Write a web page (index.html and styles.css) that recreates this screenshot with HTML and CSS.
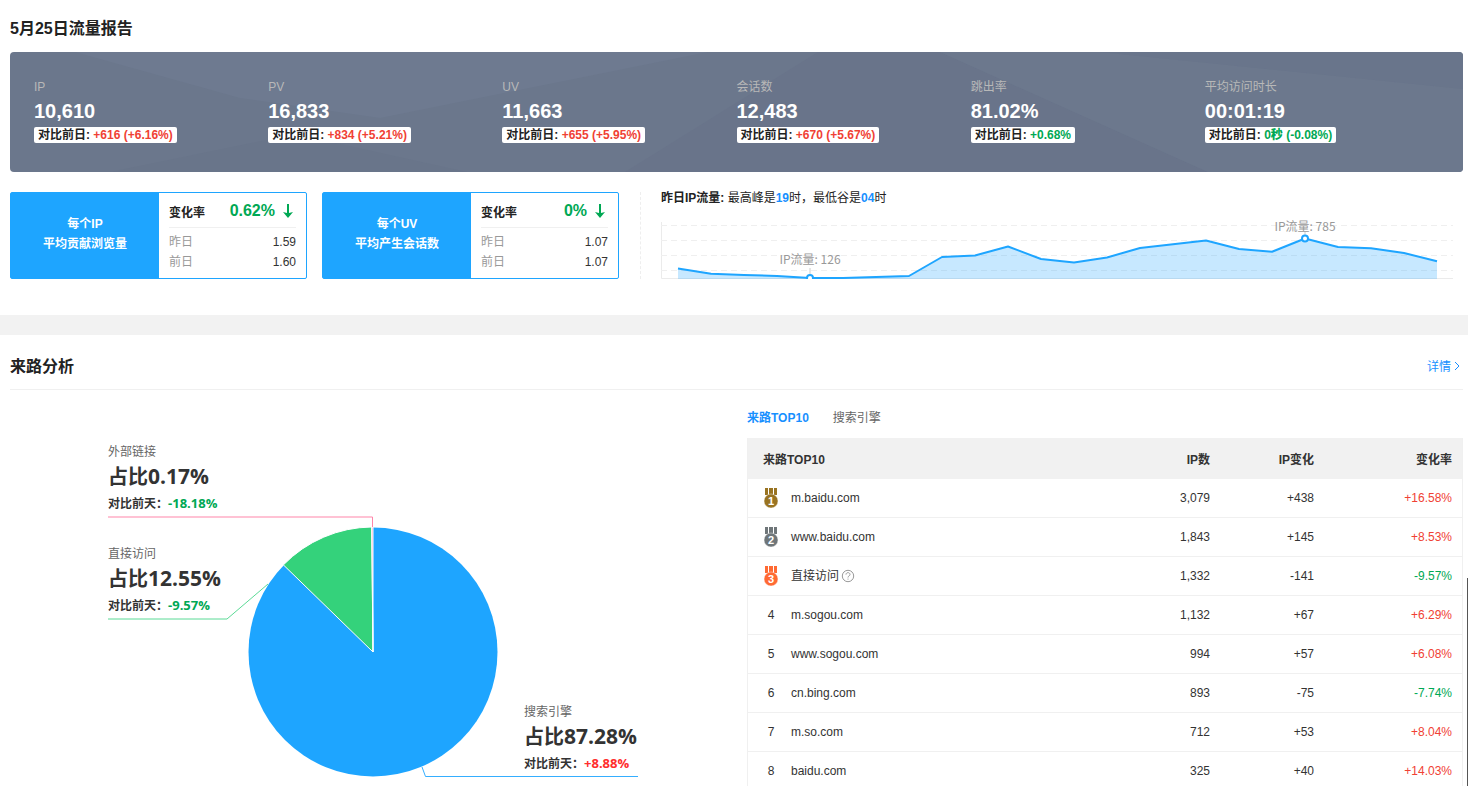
FILE: index.html
```html
<!DOCTYPE html>
<html lang="zh-CN">
<head>
<meta charset="utf-8">
<title>流量报告</title>
<link rel="stylesheet" href="styles.css">
</head>
<body>
<main class="page">
  <section class="report">
    <h2 class="title">5月25日流量报告</h2>
    <div class="banner">
      <svg class="banner-bg" viewBox="0 0 1453 120" preserveAspectRatio="none" aria-hidden="true">
        <rect width="1453" height="120" fill="#6b778c"/>
        <path d="M65 0H698L370 66L230 46Z" fill="#6e7a90"/>
        <path d="M100 120L285 82L457 120Z" fill="#69758a"/>
        <path d="M615 120L808 0H930L1198 120Z" fill="#69748a"/>
        <path d="M930 0H1090L1453 37V120H1198Z" fill="#6c788d"/>
        <path d="M1090 0H1453V37Z" fill="#69758b"/>
      </svg>
      <dl class="stat"><dt>IP</dt><dd class="num">10,610</dd><dd class="badge">对比前日: <b class="up">+616 (+6.16%)</b></dd></dl>
      <dl class="stat"><dt>PV</dt><dd class="num">16,833</dd><dd class="badge">对比前日: <b class="up">+834 (+5.21%)</b></dd></dl>
      <dl class="stat"><dt>UV</dt><dd class="num">11,663</dd><dd class="badge">对比前日: <b class="up">+655 (+5.95%)</b></dd></dl>
      <dl class="stat"><dt>会话数</dt><dd class="num">12,483</dd><dd class="badge">对比前日: <b class="up">+670 (+5.67%)</b></dd></dl>
      <dl class="stat"><dt>跳出率</dt><dd class="num">81.02%</dd><dd class="badge">对比前日: <b class="down">+0.68%</b></dd></dl>
      <dl class="stat"><dt>平均访问时长</dt><dd class="num">00:01:19</dd><dd class="badge">对比前日: <b class="down">0秒 (-0.08%)</b></dd></dl>
    </div>

    <div class="detail">
      <div class="card">
        <div class="card-name">每个IP<br>平均贡献浏览量</div>
        <div class="card-body">
          <div class="rate"><span>变化率</span><strong class="down">0.62%<svg class="arrow" viewBox="0 0 10 14" aria-hidden="true"><path d="M5 0V12"/><path class="head" d="M0 8L4 9H6L10 8L5 14Z"/></svg></strong></div>
          <div class="row"><span>昨日</span><span class="val">1.59</span></div>
          <div class="row"><span>前日</span><span class="val">1.60</span></div>
        </div>
      </div>
      <div class="card">
        <div class="card-name">每个UV<br>平均产生会话数</div>
        <div class="card-body">
          <div class="rate"><span>变化率</span><strong class="down">0%<svg class="arrow" viewBox="0 0 10 14" aria-hidden="true"><path d="M5 0V12"/><path class="head" d="M0 8L4 9H6L10 8L5 14Z"/></svg></strong></div>
          <div class="row"><span>昨日</span><span class="val">1.07</span></div>
          <div class="row"><span>前日</span><span class="val">1.07</span></div>
        </div>
      </div>
      <div class="trend">
        <p class="trend-title"><b>昨日IP流量:</b> 最高峰是<b class="hl">19</b>时，最低谷是<b class="hl">04</b>时</p>
        <svg class="trend-chart" viewBox="0 0 802 75" role="img" aria-label="昨日IP流量">
          <path class="axis" d="M0.500 18V74.500H792"/>
          <path class="grid-line" d="M0 21.500H792M0 36.500H792M0 51.500H792M0 66.500H792"/>
          <path class="area" d="M17 75V64.500L50 69.700L83 71L116 72L149 74L182 74L215 73L248 72L281 53L314 51.500L347 42.500L380 55L413 58.500L446 53.500L479 44L512 40.300L545 36.500L578 45L611 47.700L644 34.500L677 43L710 44.300L743 49L776 57.300V75Z"/>
          <path class="line" d="M17 64.500L50 69.700L83 71L116 72L149 74L182 74L215 73L248 72L281 53L314 51.500L347 42.500L380 55L413 58.500L446 53.500L479 44L512 40.300L545 36.500L578 45L611 47.700L644 34.500L677 43L710 44.300L743 49L776 57.300"/>
          <path class="tick" d="M149 64V71M644 28V31"/>
          <circle class="dot" cx="149" cy="74" r="3"/>
          <circle class="dot" cx="644" cy="34.500" r="3"/>
          <text class="mark" x="149" y="60">IP流量: 126</text>
          <text class="mark" x="644" y="27">IP流量: 785</text>
        </svg>
      </div>
    </div>
  </section>

  <section class="source">
    <header class="source-head">
      <h2 class="title">来路分析</h2>
      <a class="more" href="#">详情<svg viewBox="0 0 8 12" aria-hidden="true"><path d="M2 1L6 5L2 9"/></svg></a>
    </header>
    <div class="source-body">
      <svg class="pie" viewBox="0 0 737 396" role="img" aria-label="来路占比">
        <circle cx="363" cy="262" r="124.500" fill="#1ea5ff"/>
        <path d="M363 262L273.400 174.900A125 125 0 0 1 361.700 137Z" fill="#34d27b" stroke="#fff"/>
        <path d="M363 262L361.700 137H363Z" fill="#ff8fb4" stroke="#fff"/>
        <path class="guide" d="M98 127H362.500V137" stroke="#ff85a9"/>
        <path class="guide" d="M98 229H217L258 194" stroke="#5bda96"/>
        <path class="guide" d="M628 386.500H415.500L412 377" stroke="#35aeff"/>
        <text class="p-name" x="98" y="66">外部链接</text>
        <text class="p-share" x="98" y="94">占比<tspan class="p-big">0.17%</tspan></text>
        <text class="p-diff" x="98" y="118">对比前天：<tspan class="p-down">-18.18%</tspan></text>
        <text class="p-name" x="98" y="168">直接访问</text>
        <text class="p-share" x="98" y="196">占比<tspan class="p-big">12.55%</tspan></text>
        <text class="p-diff" x="98" y="220">对比前天：<tspan class="p-down">-9.57%</tspan></text>
        <text class="p-name" x="514" y="326">搜索引擎</text>
        <text class="p-share" x="514" y="354">占比<tspan class="p-big">87.28%</tspan></text>
        <text class="p-diff" x="514" y="378">对比前天：<tspan class="p-up">+8.88%</tspan></text>
      </svg>
      <div class="ranking">
        <div class="tabs" role="tablist">
          <button class="tab active" role="tab" aria-selected="true">来路TOP10</button>
          <button class="tab" role="tab" aria-selected="false">搜索引擎</button>
        </div>
        <table class="table">
          <colgroup><col><col class="c-ip"><col class="c-change"><col class="c-rate"></colgroup>
          <thead><tr><th>来路TOP10</th><th>IP数</th><th>IP变化</th><th>变化率</th></tr></thead>
          <tbody>
            <tr><td><div class="site"><svg class="medal gold" viewBox="0 0 16 22"><path class="ribbon" d="M2 1H5V8H2ZM6 1H10V8H6ZM11 1H14V8H11Z"/><circle cx="8" cy="14" r="7"/><text x="8" y="18">1</text></svg>m.baidu.com</div></td><td>3,079</td><td>+438</td><td class="up">+16.58%</td></tr>
            <tr><td><div class="site"><svg class="medal silver" viewBox="0 0 16 22"><path class="ribbon" d="M2 1H5V8H2ZM6 1H10V8H6ZM11 1H14V8H11Z"/><circle cx="8" cy="14" r="7"/><text x="8" y="18">2</text></svg>www.baidu.com</div></td><td>1,843</td><td>+145</td><td class="up">+8.53%</td></tr>
            <tr><td><div class="site"><svg class="medal bronze" viewBox="0 0 16 22"><path class="ribbon" d="M2 1H5V8H2ZM6 1H10V8H6ZM11 1H14V8H11Z"/><circle cx="8" cy="14" r="7"/><text x="8" y="18">3</text></svg>直接访问<svg class="help" viewBox="0 0 14 14" aria-hidden="true"><circle cx="7" cy="7" r="5.700"/><path d="M5 5.600C5 3 9 3 9 5.500C9 7 7 6.800 7 8.500M7 9.600V10.600"/></svg></div></td><td>1,332</td><td>-141</td><td class="down">-9.57%</td></tr>
            <tr><td><div class="site"><span class="rank">4</span>m.sogou.com</div></td><td>1,132</td><td>+67</td><td class="up">+6.29%</td></tr>
            <tr><td><div class="site"><span class="rank">5</span>www.sogou.com</div></td><td>994</td><td>+57</td><td class="up">+6.08%</td></tr>
            <tr><td><div class="site"><span class="rank">6</span>cn.bing.com</div></td><td>893</td><td>-75</td><td class="down">-7.74%</td></tr>
            <tr><td><div class="site"><span class="rank">7</span>m.so.com</div></td><td>712</td><td>+53</td><td class="up">+8.04%</td></tr>
            <tr><td><div class="site"><span class="rank">8</span>baidu.com</div></td><td>325</td><td>+40</td><td class="up">+14.03%</td></tr>
          </tbody>
        </table>
      </div>
    </div>
  </section>
</main>
<div class="edge" aria-hidden="true"></div>
</body>
</html>
```
FILE: styles.css
```css
* { box-sizing: border-box; }

body {
  margin: 0;
  color: #222;
  background: #fff;
  font: 12px/20px "Liberation Sans", "Noto Sans CJK SC", sans-serif;
}

h2, p, dl, dd { margin: 0; }

.page {
  height: 100vh;
  overflow-y: auto;
  scrollbar-width: none;
}

.up { color: #f04134; }
.down { color: #00a854; }

.title { font-size: 16px; line-height: 24px; }

.report {
  padding: 17px 5px 36px 10px;
  border-bottom: 20px solid #f2f2f2;
}

.banner {
  position: relative;
  display: grid;
  grid-template-columns: repeat(6, 1fr);
  height: 120px;
  margin-top: 11px;
  padding: 25px 24px 0;
  border-radius: 4px;
  overflow: hidden;
}

.banner-bg {
  position: absolute;
  inset: 0;
  width: 100%;
  height: 100%;
}

.stat { position: relative; }
.stat dt { color: #b8b8b8; }
.num { color: #fff; font-size: 20px; font-weight: bold; line-height: 28px; }

.badge {
  width: fit-content;
  margin-top: 2px;
  padding: 0 4px;
  border-radius: 2px;
  background: #fff;
  font-weight: bold;
  line-height: 16px;
  white-space: nowrap;
}

.detail { display: flex; gap: 15px; margin-top: 20px; }

.card {
  display: flex;
  flex: 0 0 297px;
  height: 87px;
  border: 1px solid #1ea5ff;
  border-radius: 2px;
}

.card-name {
  display: flex;
  flex: 0 0 148px;
  align-items: center;
  justify-content: center;
  padding-bottom: 4px;
  color: #fff;
  background: #1ea5ff;
  font-weight: bold;
  text-align: center;
}

.card-body { flex: 1; padding: 0 10px; }

.rate {
  display: flex;
  align-items: center;
  justify-content: space-between;
  height: 35px;
  margin-bottom: 4px;
  padding-top: 2px;
  border-bottom: 1px solid #f0f0f0;
  font-weight: bold;
}

.rate span { padding-top: 4px; }
.rate strong { display: flex; align-items: center; gap: 8px; padding-right: 3px; font-size: 16px; }
.arrow { width: 10px; height: 14px; fill: none; stroke: currentColor; stroke-width: 2; }
.arrow .head { fill: currentColor; stroke: none; }
.row { display: flex; justify-content: space-between; color: #999; }
.val { color: #333; }

.trend {
  flex: 1;
  min-width: 0;
  margin-left: 6px;
  padding-left: 20px;
  border-left: 1px dashed #eee;
}

.trend-title { line-height: 12px; }
.hl { color: #1890ff; }
.trend-chart { display: block; width: 100%; }
.axis { fill: none; stroke: #ebebeb; }
.grid-line { fill: none; stroke: #efefef; stroke-dasharray: 6 4; }
.area { fill: #1ea5ff; fill-opacity: 0.25; }
.line { fill: none; stroke: #1ea5ff; stroke-width: 2; stroke-linejoin: round; }
.tick { stroke: #ccc; }
.dot { fill: #fff; stroke: #1ea5ff; stroke-width: 2; }
.mark { fill: #999; font: 12px "Noto Sans CJK SC", sans-serif; text-anchor: middle; }

.source { padding: 0 5px 0 10px; }

.source-head {
  display: flex;
  align-items: center;
  justify-content: space-between;
  height: 55px;
  padding: 10px 2px 0 0;
  border-bottom: 1px solid #f0f0f0;
}

.more { display: flex; align-items: center; gap: 2px; color: #1890ff; text-decoration: none; }
.more svg { width: 8px; height: 12px; fill: none; stroke: currentColor; }

.source-body { display: grid; grid-template-columns: 737fr 716fr; align-items: start; }

.pie { display: block; width: 100%; }
.guide { fill: none; stroke-width: 1; }
.pie text { font-family: "Open Sans", "Noto Sans CJK SC", sans-serif; fill: #333; }
.p-name { font-size: 12px; }
.pie .p-name { fill: #666; }
.p-share { font-size: 20px; font-weight: bold; }
.p-big { font-size: 21px; }
.p-diff { font-size: 12px; font-weight: bold; }
.p-up, .p-down { font-size: 13px; }
.p-up { fill: #ff2d2d; }
.p-down { fill: #00a854; }

.tabs { display: flex; gap: 24px; padding: 18px 0 10px; }
.tab { padding: 0; border: 0; background: none; color: #666; font: inherit; cursor: pointer; }
.tab.active { color: #1890ff; font-weight: bold; }

.table {
  width: 100%;
  table-layout: fixed;
  border-collapse: separate;
  border-spacing: 0;
  border: solid #f0f0f0;
  border-width: 0 1px;
  color: #333;
}

.c-ip, .c-change { width: 104px; }
.c-rate { width: 138px; }
.table th { height: 41px; padding: 2px 10px 0; background: #f1f1f1; text-align: right; }
.table td { height: 39px; padding: 0 10px; border-bottom: 1px solid #f0f0f0; text-align: right; }
.table th:first-child, .table td:first-child { padding-left: 15px; text-align: left; }

.site { display: flex; align-items: center; }
.rank { width: 16px; margin-right: 12px; text-align: center; }
.medal { width: 16px; height: 22px; margin-right: 12px; }
.medal circle { stroke: #fff; stroke-opacity: 0.4; }
.medal text { fill: #fff; font: bold 11px "Liberation Sans", sans-serif; text-anchor: middle; }
.gold { fill: #997321; }
.silver { fill: #6f7679; }
.bronze { fill: #ff6a33; }
.help { width: 14px; height: 14px; margin-left: 2px; fill: none; stroke: #999; }

.edge {
  position: fixed;
  right: 0;
  bottom: 0;
  width: 1px;
  height: 208px;
  background: #555;
}
```
